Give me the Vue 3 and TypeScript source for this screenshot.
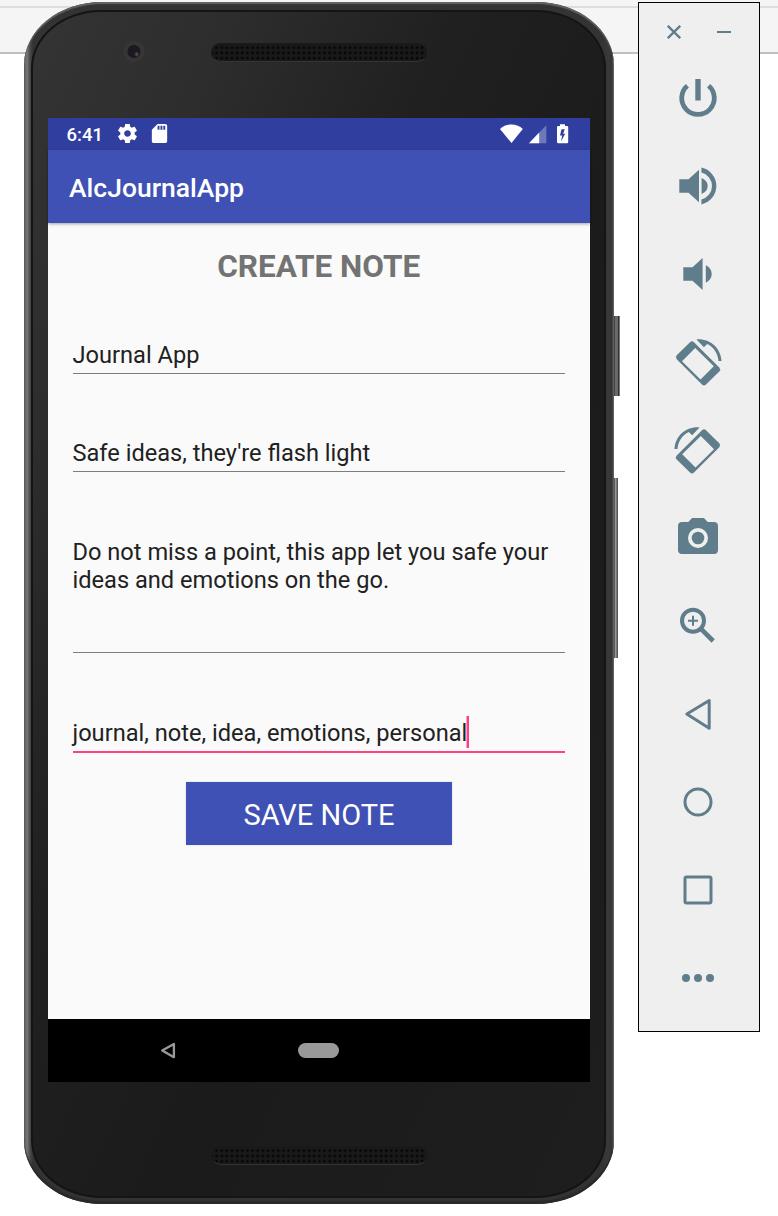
<script setup lang="ts">
import { ref } from 'vue'

const title = ref('Journal App')
const summary = ref("Safe ideas, they're flash light")
const tags = ref('journal, note, idea, emotions, personal')
</script>

<template>
  <main class="desktop">
    <div class="phone">
      <i class="side power"></i>
      <i class="side volume"></i>
      <div class="glass"></div>
      <div class="bezel top">
        <i class="camera"></i>
        <i class="speaker"></i>
      </div>
      <section class="screen">
        <div class="status">
          <span class="time">6:41</span>
          <svg class="gear" width="23" height="23" viewBox="0 0 24 24"><path fill="#fff" d="M19.43 12.98c.04-.32.07-.64.07-.98s-.03-.66-.07-.98l2.11-1.65c.19-.15.24-.42.12-.64l-2-3.46c-.12-.22-.39-.3-.61-.22l-2.49 1c-.52-.4-1.08-.73-1.69-.98l-.38-2.65C14.46 2.18 14.25 2 14 2h-4c-.25 0-.46.18-.49.42l-.38 2.65c-.61.25-1.17.59-1.69.98l-2.49-1c-.23-.09-.49 0-.61.22l-2 3.46c-.13.22-.07.49.12.64l2.11 1.65c-.04.32-.07.65-.07.98s.03.66.07.98l-2.11 1.65c-.19.15-.24.42-.12.64l2 3.46c.12.22.39.3.61.22l2.49-1c.52.4 1.08.73 1.69.98l.38 2.65c.03.24.24.42.49.42h4c.25 0 .46-.18.49-.42l.38-2.65c.61-.25 1.17-.59 1.69-.98l2.49 1c.23.09.49 0 .61-.22l2-3.46c.12-.22.07-.49-.12-.64l-2.11-1.65zM12 15.5c-1.93 0-3.5-1.57-3.5-3.5s1.57-3.5 3.5-3.5 3.5 1.57 3.5 3.5-1.57 3.5-3.5 3.5z" /></svg>
          <svg class="sd" width="23" height="23" viewBox="0 0 24 24"><path fill="#fff" d="M18 2h-8L4.02 8 4 20c0 1.100.9 2 2 2h12c1.100 0 2-.9 2-2V4c0-1.100-.9-2-2-2zm-6 6h-2V4h2v4zm3 0h-2V4h2v4zm3 0h-2V4h2v4z" /></svg>
          <span class="spacer"></span>
          <svg class="signals" width="70" height="20" viewBox="0 0 70 20">
            <path fill="#fff" d="M11.500 19 0 4.900C3 2.100 7 .5 11.500.5s8.500 1.600 11.300 4.400z" />
            <path fill="#fff" fill-opacity=".3" d="M46.300 1.300V19.200H29z" />
            <path fill="#fff" d="M39.200 8.600V19.200H29z" />
            <path fill="#fff" fill-rule="evenodd" d="M60 .3h5V2h2q1.200 0 1.200 1.200V18q0 1.200-1.200 1.200h-8.800Q57 19.200 57 18V3.200Q57 2 58.200 2H60zM61.500 5.200 60 11.600h2.200l-1.200 6 4.200-7.800h-2.100l1.700-4.600z" />
          </svg>
        </div>
        <header class="appbar">AlcJournalApp</header>
        <form class="content" @submit.prevent>
          <h1>CREATE NOTE</h1>
          <div class="field first">{{ title }}</div>
          <div class="field second">{{ summary }}</div>
          <div class="field body">Do not miss a point, this app let you safe your<br />ideas and emotions on the go.</div>
          <div class="field active"><span>{{ tags }}</span><i class="caret"></i></div>
          <button type="button">SAVE NOTE</button>
        </form>
        <nav class="navbar">
          <svg width="16" height="18" viewBox="0 0 16 18"><path d="M2.200 8.600 13.900 2V15.200z" fill="none" stroke="#999" stroke-width="2.300" stroke-linejoin="round" /></svg>
          <i class="home"></i>
        </nav>
      </section>
      <div class="bezel bottom"><i class="speaker"></i></div>
    </div>

    <aside class="tools">
      <div class="window">
        <svg width="14" height="14" viewBox="0 0 14 14"><path d="M.8.8 13.200 13.200M13.200.8.8 13.200" stroke="#607d8b" stroke-width="2.300" /></svg>
        <svg width="14" height="14" viewBox="0 0 14 14"><path d="M0 7H14" stroke="#607d8b" stroke-width="2" /></svg>
      </div>
      <svg class="tool" viewBox="0 0 60 60">
        <path class="line" stroke-width="4.800" d="M19.400 17.700A16.300 16.300 0 1 0 40.600 17.700" />
        <path d="M27.300 11h5.400v21.500h-5.400z" />
      </svg>
      <svg class="tool" viewBox="0 0 60 60">
        <path d="M11.300 23.300h9.200L31 13.700v32.600L20.500 36.700h-9.200zM33.600 22c4 1.600 6.100 4.500 6.100 8s-2.100 6.400-6.100 8zM33.400 11.600a18.800 18.800 0 0 1 0 36.800v-4.900a13.900 13.900 0 0 0 0-27z" />
      </svg>
      <svg class="tool" viewBox="0 0 60 60">
        <path d="M15.300 23.300h9.200L34.600 14v32L24.500 36.700h-9.200zM37.800 21.300c3.900 1.800 5.900 5 5.900 8.700s-2 6.900-5.900 8.700z" />
      </svg>
      <svg class="tool" viewBox="0 0 60 60">
        <g id="tilted">
          <path fill-rule="evenodd" d="M22 10.200q2-1.800 4 0L51.300 35.500q1.800 2 0 4L38 52.600q-2 1.800-4 0L8.700 27.300q-1.800-2 0-4zM27.200 16 14 29.200 32.500 47.500 45.800 34.200z" />
          <path d="M28.500 7.400C41.500 6.300 52.800 15.500 53.500 29h-3c-.5-7.500-4.600-13.700-11.300-17l-3.300 3.200z" />
        </g>
      </svg>
      <svg class="tool" viewBox="0 0 60 60"><use href="#tilted" transform="translate(60 0) scale(-1 1)" /></svg>
      <svg class="tool" viewBox="0 0 60 60">
        <path fill-rule="evenodd" d="M24 10h12l3.700 4H46q4 0 4 4v24q0 4-4 4H14q-4 0-4-4V18q0-4 4-4h6.300zM30 20a10 10 0 1 0 0 20 10 10 0 1 0 0-20z" />
        <circle cx="30" cy="30" r="6.300" />
      </svg>
      <svg class="tool" viewBox="0 0 60 60">
        <circle class="line" cx="25" cy="24.700" r="11" stroke-width="4" />
        <path class="line" stroke-width="2" d="M20 24.700h10M25 19.700v10" />
        <path class="line" stroke-width="4.600" d="M33.500 33.300 45.200 45" />
      </svg>
      <svg class="tool" viewBox="0 0 60 60"><path class="line" stroke-width="3" stroke-linejoin="round" d="M18.800 30 41.200 16.500v27.800z" /></svg>
      <svg class="tool" viewBox="0 0 60 60"><circle class="line" stroke-width="3" cx="30" cy="30" r="13" /></svg>
      <svg class="tool" viewBox="0 0 60 60"><rect class="line" stroke-width="3" x="17" y="17" width="26" height="26" rx="1.500" /></svg>
      <svg class="tool" viewBox="0 0 60 60"><circle cx="18" cy="30" r="4" /><circle cx="30" cy="30" r="4" /><circle cx="42" cy="30" r="4" /></svg>
    </aside>
  </main>
</template>

<style>
body { margin: 0; background: #fff; }
</style>

<style scoped>
* { box-sizing: border-box; }
svg { display: block; }
.desktop {
  display: flex;
  align-items: flex-start;
  width: 778px;
  height: 1216px;
  padding: 2px 0 0 24px;
  overflow: hidden;
  font-family: Roboto, sans-serif;
  background: linear-gradient(#f5f5f5 0 6px, #dedede 6px 8px, #f5f5f5 8px 52px, #c0c0c0 52px 54px, #fff 54px);
}
.phone {
  position: relative;
  width: 590px;
  height: 1202px;
  border-radius: 78px / 63px;
  background: linear-gradient(90deg, #5b5b5b 0, #777 3px, #4a4a4a 6px, #333 9px, #333 577px, #3b3839 585px, #353334 588px, #777 590px);
  box-shadow: inset 0 2px 1px #646464, inset 0 -3px 1px #292929;
}
.glass {
  position: absolute;
  inset: 8px 8px 6px 7px;
  border: 2px solid #141414;
  border-radius: 70px / 58px;
  background: linear-gradient(115deg, #343435 0, #2d2d2d 18%, #202020 38%, #1b1b1b 60%, #1e1e1e 100%);
}
.side {
  position: absolute;
  left: 590px;
}
.side.power { top: 314px; width: 6px; height: 80px; background: linear-gradient(90deg, #444 0 1px, #696969 1px 4px, #333 4px 5px, #777 5px); }
.side.volume { top: 476px; width: 4px; height: 180px; background: linear-gradient(90deg, #555 0 1px, #999 1px 2px, #777 2px 3px, #555 3px); }
.bezel {
  position: relative;
  display: flex;
}
.bezel.top { height: 116px; padding: 38px 0 0 98px; }
.bezel.bottom { height: 120px; padding: 62px 0 0 187px; }
.camera {
  width: 23px;
  height: 23px;
  margin-right: 66px;
  border-radius: 50%;
  background: radial-gradient(circle at 64% 62%, #5e4443 0 1px, transparent 2.500px), radial-gradient(circle at 52% 50%, #1c1a20 0 6px, #363636 7px 10px, #303030 11px);
}
.speaker {
  width: 216px;
  height: 19px;
  margin-top: 2px;
  border-radius: 10px;
  border: 1px solid #1a1a1a;
  border-bottom-color: #333;
  background: radial-gradient(circle, #060606 0 1px, transparent 1.7px) 2px 1px / 5.15px 5.300px, #191919;
}
.top .speaker { margin-top: 3px; }
.screen {
  position: relative;
  display: flex;
  flex-direction: column;
  width: 542px;
  height: 964px;
  margin-left: 24px;
  background: #fafafa;
}
.status {
  display: flex;
  align-items: center;
  height: 32px;
  padding: 0 20px 0 18.500px;
  background: #303f9f;
}
.time { width: 49.500px; padding-top: 1px; font-size: 18.500px; font-weight: 500; line-height: 32px; color: #fff; }
.gear, .sd, .signals { margin-top: -1px; }
.sd { margin-left: 8.500px; }
.spacer { flex: 1; }
.appbar {
  height: 73px;
  padding-left: 21px;
  font-size: 26.500px;
  font-weight: 500;
  line-height: 76px;
  color: #fff;
  background: #3f51b5;
  box-shadow: 0 1px 3px rgba(0, 0, 0, .35);
}
.content {
  display: flex;
  flex-direction: column;
  height: 796px;
  padding: 24px 25px 0 24.500px;
}
h1 { height: 38px; margin: 0; font-size: 31.500px; font-weight: 700; line-height: 39px; color: #737373; text-align: center; }
.field {
  flex: none;
  height: 40px;
  border-bottom: 1.200px solid #7d7d7d;
  font-size: 23.620px;
  line-height: 28px;
  color: #212121;
  white-space: nowrap;
}
.first { margin-top: 49px; padding-top: 7px; }
.second { margin-top: 58px; padding-top: 7px; }
.body { height: 123px; margin-top: 58px; padding-top: 8px; }
.active { display: flex; height: 40px; margin-top: 60px; padding-top: 6px; border-bottom: 2px solid #ff4081; }
.caret { width: 3px; height: 32px; margin: -3px 0 0 -1px; background: linear-gradient(90deg, #ff9fc0 0 1px, #ff4081 1px); }
button {
  width: 266px;
  height: 63px;
  margin: 29px 0 0 113.500px;
  padding: 3px 0 0;
  border: 0;
  color: #fff;
  background: #3f51b5;
  box-shadow: 0 0 2px rgba(0, 0, 0, .15);
  font: 400 29px/60px Roboto, sans-serif;
}
.navbar {
  display: flex;
  align-items: center;
  height: 63px;
  padding-left: 112px;
  background: #000;
}
.home { width: 41px; height: 15px; margin-left: 122px; border-radius: 8px; background: #999; }
.tools {
  width: 122px;
  height: 1030px;
  margin-left: 24px;
  border: 1px solid #000;
  background: #efefef;
}
.window { display: flex; gap: 36px; height: 65px; padding: 22px 0 0 28px; }
.tool { width: 60px; height: 60px; margin: 0 0 28px 29px; fill: #607d8b; }
.line { fill: none; stroke: #607d8b; }
</style>
